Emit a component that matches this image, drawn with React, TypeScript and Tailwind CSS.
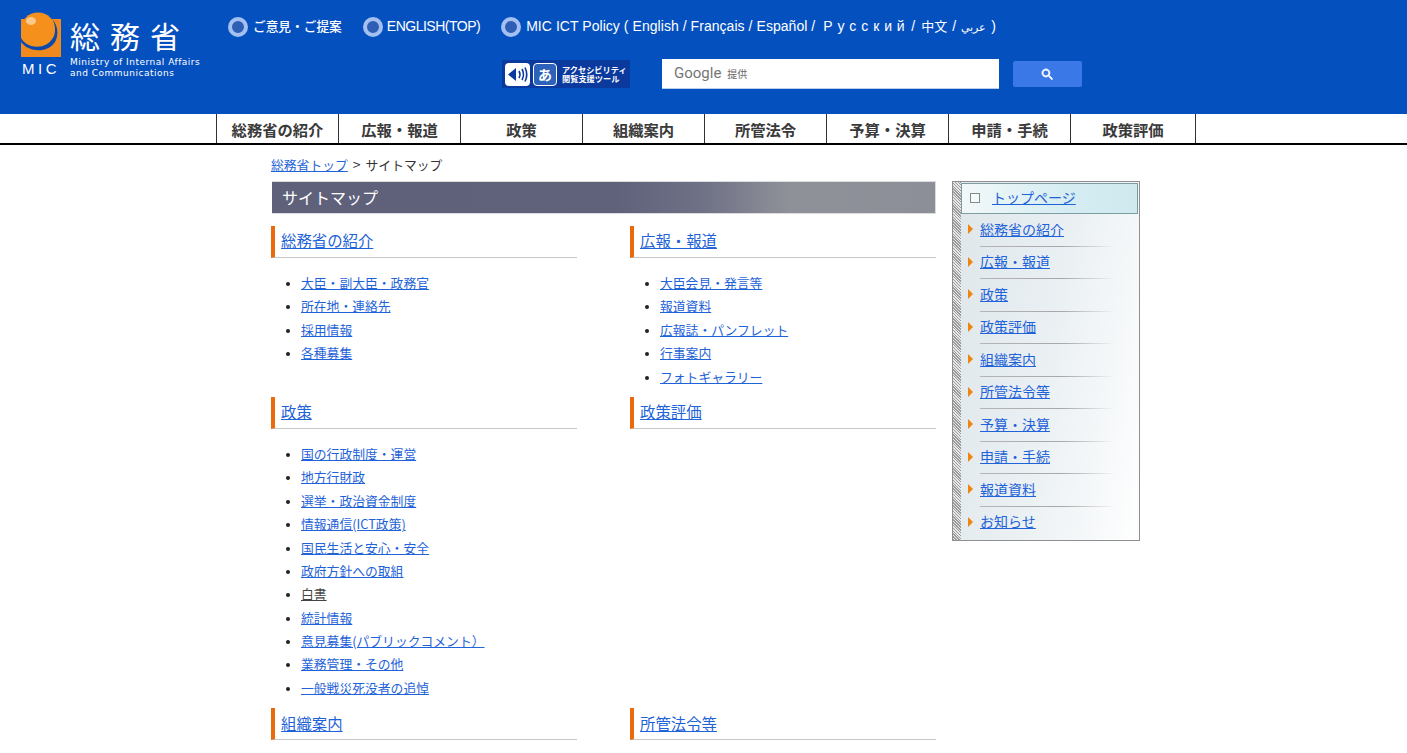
import React from "react";

const font = { fontFamily: '"Noto Sans CJK JP", "Liberation Sans", sans-serif' };

const nav = ["総務省の紹介", "広報・報道", "政策", "組織案内", "所管法令", "予算・決算", "申請・手続", "政策評価"];
const side = ["総務省の紹介", "広報・報道", "政策", "政策評価", "組織案内", "所管法令等", "予算・決算", "申請・手続", "報道資料", "お知らせ"];

function Radio() {
  return <span className="block w-[20px] h-[20px] rounded-full border-[4px] border-[#a3c0f0] bg-[#2f5fb5] shrink-0" />;
}

function Section({ title, items = [] }: { title: string; items?: string[] }) {
  return (
    <div>
      <div className="h-[32px] border-l-[4px] border-l-[#ea6a0c] border-b border-b-[#c8c8c8] pl-[6px] pb-[1px] flex items-center">
        <a href="#" className="text-[15.4px] text-[#1f63d8] underline leading-none">{title}</a>
      </div>
      {items.length > 0 && (
        <ul className="mt-[13px] mb-[9px] pl-[30px] list-disc text-[12.8px] text-[#222] marker:text-[10px]">
          {items.map((t) => (
            <li key={t} className="h-[23.4px] leading-[23.4px]">
              <a href="#" className={t === "白書" ? "text-[#444] underline" : "text-[#1f63d8] underline"}>{t}</a>
            </li>
          ))}
        </ul>
      )}
    </div>
  );
}

function Logo() {
  return (
    <div className="relative w-[200px] h-[80px] text-white ml-[21px] mt-[12px] shrink-0">
      <svg width="42" height="46" viewBox="0 0 42 46" className="absolute left-0 top-0">
        <rect x="0" y="7" width="40" height="38" fill="#f08a1e" />
        <circle cx="17" cy="18" r="17.5" fill="#f5901c" />
        <path d="M0 26 C6 37 26 39 33 24 C35 18 34 11 31 7 C37 13 38 23 34 30 C26 42 7 40 0 30Z" fill="#0a49ad" />
        <ellipse cx="10" cy="9" rx="5" ry="4" fill="#fbc98b" />
      </svg>
      <div className="absolute left-[49px] top-[5px] text-[30px] leading-[36px] tracking-[10px] whitespace-nowrap">総務省</div>
      <div className="absolute left-[1px] top-[49px] text-[15px] leading-[16px] tracking-[3.5px] font-['Liberation_Sans'] whitespace-nowrap">MIC</div>
      <div className="absolute left-[49px] top-[45px] text-[9px] leading-[10.5px] tracking-[0.5px] font-['DejaVu_Sans'] whitespace-nowrap">
        <div>Ministry of Internal Affairs</div>
        <div>and Communications</div>
      </div>
    </div>
  );
}

function AccessBadge() {
  return (
    <div className="w-[128px] h-[28px] bg-[#0b3a9e] flex items-center pl-[3px] gap-[3px] shrink-0">
      <svg width="25" height="23" viewBox="0 0 25 23" className="shrink-0">
        <rect width="25" height="23" rx="4" fill="#fff" />
        <path d="M3 11.5 L11 5 V18Z" fill="#0b3a9e" />
        <path d="M14 8 Q16 11.5 14 15 M17 6 Q20 11.5 17 17 M20 4.5 Q23.5 11.5 20 18.5" fill="none" stroke="#0b3a9e" strokeWidth="1.6" />
      </svg>
      <div className="w-[24px] h-[23px] rounded-[4px] bg-[#2e62b8] border border-white text-white text-[14px] font-bold leading-[20px] text-center shrink-0">あ</div>
      <div className="text-white text-[8.2px] font-bold leading-[9.5px] ml-[2px] whitespace-nowrap">
        <div>アクセシビリティ</div>
        <div>閲覧支援ツール</div>
      </div>
    </div>
  );
}

export default function App() {
  return (
    <div className="h-[753px] overflow-hidden bg-white text-[#222]" style={font}>
      <header className="h-[114px] bg-[#0550bf] flex">
        <Logo />
        <div className="ml-[7px]">
          <div className="flex items-center h-[20px] mt-[17px] text-white text-[14px] whitespace-nowrap">
            <Radio />
            <span className="ml-[5px] text-[12.7px] font-medium relative -top-px">ご意見・ご提案</span>
            <span className="ml-[21px]"><Radio /></span>
            <span className="ml-[4px] font-['Liberation_Sans'] tracking-[-0.5px] relative -top-px">ENGLISH(TOP)</span>
            <span className="ml-[21px]"><Radio /></span>
            <span className="ml-[5px] font-['Liberation_Sans'] tracking-[0.05px] relative -top-px">
              MIC ICT Policy ( English / Français / Español / <span className="ml-[4px] tracking-[0.5px]">Р у с с к и й</span>
              <span className="ml-[6px]">/</span>
              <span style={font} className="ml-[6px] text-[13px]">中文</span>
              <span className="ml-[5px]">/</span>
              <span className="ml-[5px] text-[11px]">عربي</span>
              <span className="ml-[5px]">)</span>
            </span>
          </div>
          <div className="flex items-center mt-[22px] ml-[274px]">
            <AccessBadge />
            <div className="ml-[32px] w-[337px] h-[30px] bg-white border-b border-[#b8d0f0] flex items-center pl-[12px] shrink-0">
              <span className="text-[15px] text-[#757575] font-['Roboto']">Google</span>
              <span className="ml-[6px] text-[10px] text-[#666]">提供</span>
            </div>
            <div className="ml-[14px] w-[69px] h-[26px] bg-[#3b78e7] rounded-[2px] flex items-center justify-center shrink-0">
              <svg width="15" height="15" viewBox="0 0 24 24" fill="#fff">
                <path d="M15.5 14h-.79l-.28-.27C15.41 12.59 16 11.11 16 9.5 16 5.91 13.09 3 9.5 3S3 5.91 3 9.5 5.91 16 9.5 16c1.61 0 3.09-.59 4.23-1.57l.27.28v.79l5 4.99L20.49 19l-4.99-5zm-6 0C7.01 14 5 11.99 5 9.5S7.01 5 9.5 5 14 7.01 14 9.5 11.99 14 9.5 14z" stroke="#fff" strokeWidth="1" />
              </svg>
            </div>
          </div>
        </div>
      </header>

      <nav className="h-[31px] border-b-2 border-black flex pl-[216px]">
        {nav.map((t, i) => (
          <div key={t} className={`${i === 7 ? "w-[126px] border-r" : "w-[122px]"} border-l border-[#333] h-[29px] pt-[2px] flex items-center justify-center text-[15.3px] font-bold text-[#3a3a3a] whitespace-nowrap`}>
            {t}
          </div>
        ))}
      </nav>

      <div className="flex pl-[271px] pt-[8px]">
        <main className="w-[665px] shrink-0">
          <div className="h-[23px] flex items-center text-[12.8px] text-[#333]">
            <a href="#" className="text-[#1f63d8] underline">総務省トップ</a>
            <span className="ml-[5px] text-[14px]">&gt;</span>
            <span className="ml-[5px]">サイトマップ</span>
          </div>
          <div className="ml-[1px] mt-[5px] h-[33px] w-[664px] border-y border-r border-[#dcdcdc] flex items-center pl-[10px] pb-[2px] text-white text-[16px] bg-[linear-gradient(90deg,#5f617b_0%,#60627c_52%,#6f7186_65%,#8f9199_78%,#8d8f98_100%)]">
            サイトマップ
          </div>
          <div className="grid grid-cols-[306px_306px] gap-x-[53px] mt-[12px]">
            <Section title="総務省の紹介" items={["大臣・副大臣・政務官", "所在地・連絡先", "採用情報", "各種募集"]} />
            <Section title="広報・報道" items={["大臣会見・発言等", "報道資料", "広報誌・パンフレット", "行事案内", "フォトギャラリー"]} />
            <Section title="政策" items={["国の行政制度・運営", "地方行財政", "選挙・政治資金制度", "情報通信(ICT政策)", "国民生活と安心・安全", "政府方針への取組", "白書", "統計情報", "意見募集(パブリックコメント）", "業務管理・その他", "一般戦災死没者の追悼"]} />
            <Section title="政策評価" />
            <Section title="組織案内" />
            <Section title="所管法令等" />
          </div>
        </main>

        <aside className="ml-[16px] mt-[28px] w-[188px] h-[360px] border border-[#8f8f8f] flex shrink-0 self-start">
          <div className="w-[8px] bg-[repeating-linear-gradient(45deg,#9a9a9a_0,#9a9a9a_1px,#e8e8e8_1px,#e8e8e8_2px)] shrink-0" />
          <div className="flex-1 pt-[1px] bg-[linear-gradient(100deg,#dfe7eb_0%,#e9eff2_45%,#f8fafb_85%,#ffffff_100%)]">
            <div className="h-[31px] border border-[#7f9ca3] flex items-center pl-[8px] pb-[2px] bg-[linear-gradient(90deg,#f2f8f9_0%,#d5edf2_60%,#cfe9ef_100%)] mr-[1px]">
              <span className="w-[10px] h-[10px] border border-[#888] bg-white/40 shrink-0" />
              <a href="#" className="ml-[12px] text-[14px] text-[#1f63d8] underline">トップページ</a>
            </div>
            {side.map((t, i) => (
              <div key={t} className="relative h-[32.5px] flex items-center pl-[7px] pb-[2px]">
                <span className="w-0 h-0 border-y-[5px] border-y-transparent border-l-[5px] border-l-[#f08412] shrink-0" />
                <a href="#" className="ml-[7px] text-[14px] text-[#1f63d8] underline">{t}</a>
                {i < 9 && <span className="absolute left-[19px] bottom-0 w-[136px] h-px bg-[linear-gradient(90deg,#b5b5b5_0%,#a8a8a8_60%,#ffffff00_100%)]" />}
              </div>
            ))}
          </div>
        </aside>
      </div>
    </div>
  );
}
